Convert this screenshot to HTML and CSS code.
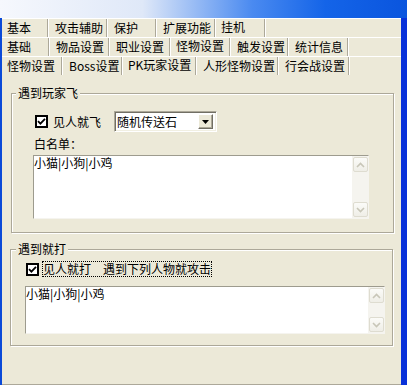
FILE: index.html
```html
<!DOCTYPE html>
<html lang="zh-CN">
<head>
    <meta charset="UTF-8">
    <meta name="viewport" content="width=device-width, initial-scale=1.0">
    <title>挂机 - PK玩家设置</title>
    <link rel="stylesheet" href="styles.css">
</head>
<body>
    <div id="titleBar"></div>
    <div id="frame">
        <div class="tabRow" id="tabsMain">
            <span class="tab">基本</span>
            <span class="tab">攻击辅助</span>
            <span class="tab">保护</span>
            <span class="tab">扩展功能</span>
            <span class="tab selected">挂机</span>
        </div>
        <div class="tabRow" id="tabsHang">
            <span class="tab">基础</span>
            <span class="tab">物品设置</span>
            <span class="tab">职业设置</span>
            <span class="tab selected">怪物设置</span>
            <span class="tab">触发设置</span>
            <span class="tab">统计信息</span>
        </div>
        <div class="tabRow" id="tabsTarget">
            <span class="tab">怪物设置</span>
            <span class="tab">Boss设置</span>
            <span class="tab selected">PK玩家设置</span>
            <span class="tab">人形怪物设置</span>
            <span class="tab">行会战设置</span>
        </div>
        <div id="page">
            <fieldset class="group" id="groupFly">
                <legend>遇到玩家飞</legend>
                <div class="optionLine">
                    <label class="check">
                        <span class="box"><svg width="9" height="9" viewBox="0 0 9 9"><path d="M1 4.2 L3.4 6.6 L8 1.8" fill="none" stroke="#000" stroke-width="1.8"/></svg></span>
                        见人就飞
                    </label>
                    <div class="combo">
                        <span class="comboText">随机传送石</span>
                        <span class="comboButton"><svg width="7" height="4" viewBox="0 0 7 4"><path d="M0 0 H7 L3.5 4 Z" fill="#000"/></svg></span>
                    </div>
                </div>
                <div class="caption">白名单：</div>
                <div class="memo" id="memoWhite">
                    <div class="memoText">小猫|小狗|小鸡</div>
                    <div class="scrollBar">
                        <span class="scrollBtn"><svg width="9" height="6" viewBox="0 0 9 6"><path d="M1 5 L4.5 1.5 L8 5" fill="none" stroke="#c8c6b8" stroke-width="1.6"/></svg></span>
                        <span class="scrollBtn"><svg width="9" height="6" viewBox="0 0 9 6"><path d="M1 1 L4.5 4.5 L8 1" fill="none" stroke="#c8c6b8" stroke-width="1.6"/></svg></span>
                    </div>
                </div>
            </fieldset>
            <fieldset class="group" id="groupHit">
                <legend>遇到就打</legend>
                <div class="optionLine">
                    <label class="check">
                        <span class="box"><svg width="9" height="9" viewBox="0 0 9 9"><path d="M1 4.2 L3.4 6.6 L8 1.8" fill="none" stroke="#000" stroke-width="1.8"/></svg></span>
                        <span class="focusText">见人就打　遇到下列人物就攻击</span>
                    </label>
                </div>
                <div class="memo" id="memoHit">
                    <div class="memoText">小猫|小狗|小鸡</div>
                    <div class="scrollBar">
                        <span class="scrollBtn"><svg width="9" height="6" viewBox="0 0 9 6"><path d="M1 5 L4.5 1.5 L8 5" fill="none" stroke="#c8c6b8" stroke-width="1.6"/></svg></span>
                        <span class="scrollBtn"><svg width="9" height="6" viewBox="0 0 9 6"><path d="M1 1 L4.5 4.5 L8 1" fill="none" stroke="#c8c6b8" stroke-width="1.6"/></svg></span>
                    </div>
                </div>
            </fieldset>
        </div>
    </div>
</body>
</html>
```

FILE: styles.css
```css
body{
    margin: 0px;
    width: 407px;
    height: 385px;
    overflow: hidden;
    background-color: #ece9d8;
    font-family: "Noto Sans CJK SC", sans-serif;
    font-size: 12px;
    color: #000;
}
#titleBar{
    height: 18px;
    background: linear-gradient(to right, #f6f8fd 0%, #dfe8f8 35%, #4a8af0 62%, #1464e8 80%, #0a55de 100%);
}
#frame{
    height: 367px;
    display: flex;
    flex-direction: column;
    border-left: 2px solid #0b4ad8;
    border-right: 6px solid #0831d9;
}
/* tab strips, one grid per row */
.tabRow{
    display: grid;
    height: 18px;
    border-top: 1px solid #fff;
}
#tabsMain{
    grid-template-columns: 46px 59px 49px 59px 50px;
}
#tabsHang{
    grid-template-columns: 47px 60px 61px 60px 58px 60px;
}
#tabsTarget{
    grid-template-columns: 60px 60px 74px 82px 71px;
}
.tab{
    padding-left: 7px;
    line-height: 18px;
    white-space: nowrap;
    border-right: 1px solid #aca899;
    box-shadow: 1px 0 0 #fff;
}
.tab:first-child{
    padding-left: 5px;
}
.tab.selected{
    line-height: 15px;
    padding-bottom: 3px;
    padding-left: 6px;
}
#page{
    flex: 1;
    padding-top: 11px;
    border-bottom: 1px solid #aca899;
}
.group{
    box-sizing: border-box;
    width: 383px;
    margin: 0px;
    padding: 0px;
    border: 1px solid #aca899;
    box-shadow: inset 1px 1px 0 #fff, 1px 1px 0 #fff;
}
.group legend{
    margin-left: 4px;
    padding: 0 2px;
    line-height: 14px;
    background-color: #ece9d8;
}
#groupFly{
    margin-left: 9px;
    padding-bottom: 13px;
}
#groupHit{
    margin: 9px 0 0 8px;
    padding-bottom: 11px;
}
#groupHit legend{
    margin-left: 5px;
}
.optionLine{
    display: flex;
    align-items: center;
}
#groupFly .optionLine{
    height: 21px;
    margin: 11px 0 0 23px;
}
#groupHit .optionLine{
    height: 16px;
    margin: 5px 0 0 15px;
}
.check{
    display: flex;
    align-items: center;
    gap: 5px;
    line-height: 14px;
}
#groupHit .check{
    gap: 3px;
}
.box{
    box-sizing: border-box;
    width: 13px;
    height: 13px;
    border: 2px solid #000;
    background-color: #fff;
    display: flex;
    align-items: center;
    justify-content: center;
}
.focusText{
    border: 1px dotted #000;
    line-height: 14px;
}
.combo{
    box-sizing: border-box;
    width: 103px;
    height: 21px;
    margin-left: 13px;
    display: flex;
    align-items: center;
    background-color: #fff;
    border: 1px solid;
    border-color: #aca899 #fff #fff #aca899;
    box-shadow: inset 1px 1px 0 #716f64, inset -1px -1px 0 #f1efe2;
}
.comboText{
    padding-left: 2px;
    line-height: 14px;
}
.comboButton{
    box-sizing: border-box;
    width: 15px;
    height: 15px;
    margin: 0 3px 0 auto;
    display: flex;
    align-items: center;
    justify-content: center;
    background-color: #ece9d8;
    border: 1px solid;
    border-color: #fff #716f64 #716f64 #fff;
    box-shadow: inset -1px -1px 0 #aca899;
}
.caption{
    margin: 5px 0 0 22px;
    line-height: 14px;
}
.memo{
    box-sizing: border-box;
    display: flex;
    background-color: #fff;
    border: 1px solid;
    border-color: #9d9b8e #f5f4ef #f5f4ef #9d9b8e;
}
#memoWhite{
    width: 336px;
    height: 64px;
    margin: 4px 0 0 21px;
}
#memoHit{
    width: 360px;
    height: 48px;
    margin: 9px 0 0 14px;
}
.memoText{
    flex: 1;
    line-height: 14px;
}
.scrollBar{
    width: 16px;
    display: flex;
    flex-direction: column;
    justify-content: space-between;
    background-color: #f5f4ef;
}
.scrollBtn{
    box-sizing: border-box;
    height: 15px;
    margin: 1px 0 0 1px;
    display: flex;
    align-items: center;
    justify-content: center;
    border: 1px solid #dedcd0;
    border-radius: 2px;
    background: linear-gradient(#fbfbf8, #efeee7);
}
.scrollBtn + .scrollBtn{
    margin: 0 0 1px 1px;
}
```
